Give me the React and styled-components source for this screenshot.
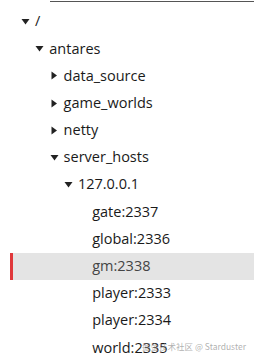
import React from 'react';
import styled, { createGlobalStyle } from 'styled-components';

const GlobalStyle = createGlobalStyle`
  html, body {
    margin: 0;
    padding: 0;
    background: #fff;
  }
  body {
    font-family: "Open Sans", "Noto Sans", "Noto Sans CJK SC", sans-serif;
  }
`;

const tree = [
  { label: '/', depth: 0, open: true },
  { label: 'antares', depth: 1, open: true },
  { label: 'data_source', depth: 2, open: false },
  { label: 'game_worlds', depth: 2, open: false },
  { label: 'netty', depth: 2, open: false },
  { label: 'server_hosts', depth: 2, open: true },
  { label: '127.0.0.1', depth: 3, open: true },
  { label: 'gate:2337', depth: 4, leaf: true },
  { label: 'global:2336', depth: 4, leaf: true },
  { label: 'gm:2338', depth: 4, leaf: true, selected: true },
  { label: 'player:2333', depth: 4, leaf: true },
  { label: 'player:2334', depth: 4, leaf: true },
  { label: 'world:2335', depth: 4, leaf: true },
];

const Caret = ({ open }) => (
  <svg width="9" height="9" viewBox="0 0 9 9">
    {open ? (
      <polygon points="0.5,2 8.5,2 4.5,7.5" fill="#222" />
    ) : (
      <polygon points="1.5,0.5 7,4.5 1.5,8.5" fill="#222" />
    )}
  </svg>
);

const App = () => (
  <Page>
    <GlobalStyle />
    <TopRule />
    <Tree>
      {tree.map((node, i) => (
        <Row key={i} $selected={node.selected}>
          <Indent $depth={node.depth} />
          <CaretSlot>{!node.leaf && <Caret open={node.open} />}</CaretSlot>
          <Label $selected={node.selected}>{node.label}</Label>
        </Row>
      ))}
    </Tree>
    <Watermark>掘金技术社区 @ Starduster</Watermark>
  </Page>
);

const Page = styled.div`
  position: relative;
  width: 254px;
  height: 361px;
  overflow: hidden;
  background: #fff;
`;

const TopRule = styled.div`
  margin-left: 50px;
  height: 1px;
  margin-top: 1px;
  background: #555;
`;

const Tree = styled.div`
  display: flex;
  flex-direction: column;
  padding-top: 6px;
`;

const Row = styled.div`
  display: flex;
  align-items: center;
  height: 27.2px;
  margin-left: 10px;
  padding-left: 10px;
  background: ${(p) => (p.$selected ? '#e4e4e4' : 'transparent')};
  box-shadow: ${(p) => (p.$selected ? 'inset 3px 0 0 #e0383b' : 'none')};
`;

const Indent = styled.span`
  width: ${(p) => p.$depth * 14.3}px;
  flex: none;
`;

const CaretSlot = styled.span`
  width: 14px;
  flex: none;
  display: flex;
  align-items: center;
  margin-left: 1px;
`;

const Label = styled.span`
  font-size: 14.5px;
  color: ${(p) => (p.$selected ? '#444' : '#1a1a1a')};
  white-space: nowrap;
  line-height: 1;
`;

const Watermark = styled.div`
  position: absolute;
  right: 8px;
  bottom: 9px;
  font-size: 8.5px;
  color: rgba(150, 150, 150, 0.75);
  font-family: "Noto Sans CJK SC", "Noto Sans", sans-serif;
`;

export default App;
